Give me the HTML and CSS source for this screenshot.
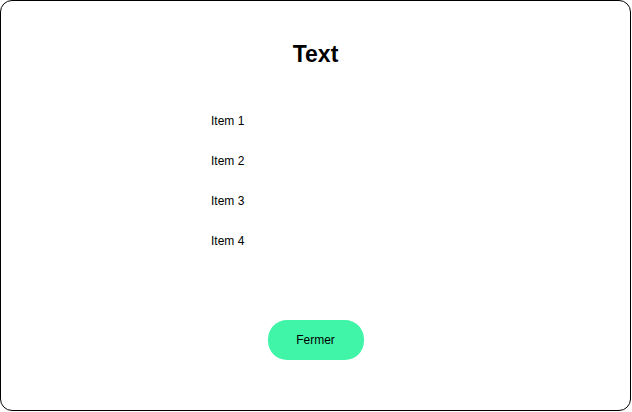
FILE: index.html
```html
<!DOCTYPE html>
<html>
<head>
<meta charset="utf-8">
<link rel="stylesheet" href="styles.css">
</head>
<body>
<div class="card">
  <h1 class="title">Text</h1>
  <ul class="list">
    <li class="item">Item 1</li>
    <li class="item">Item 2</li>
    <li class="item">Item 3</li>
    <li class="item">Item 4</li>
  </ul>
  <button class="close">Fermer</button>
</div>
</body>
</html>
```
FILE: styles.css
```css
html, body {
  margin: 0;
  padding: 0;
  background: #fff;
}
body {
  font-family: "Liberation Sans", Arial, sans-serif;
  color: #000;
}
.card {
  box-sizing: border-box;
  width: 631px;
  height: 411px;
  border: 1px solid #000;
  border-radius: 12px;
  display: flex;
  flex-direction: column;
  align-items: center;
  padding-top: 39px;
}
.title {
  margin: 0;
  font-size: 23px;
  font-weight: bold;
  line-height: 28px;
}
.list {
  list-style: none;
  margin: 33px 0 0 0;
  padding: 0;
  width: 209px;
}
.item {
  height: 40px;
  line-height: 40px;
  font-size: 12px;
}
.close {
  margin-top: 59px;
  width: 96px;
  height: 40px;
  border: none;
  border-radius: 19px;
  background: #40f5a8;
  font-family: "Liberation Sans", Arial, sans-serif;
  font-size: 12px;
  color: #000;
  padding: 0;
}
```
